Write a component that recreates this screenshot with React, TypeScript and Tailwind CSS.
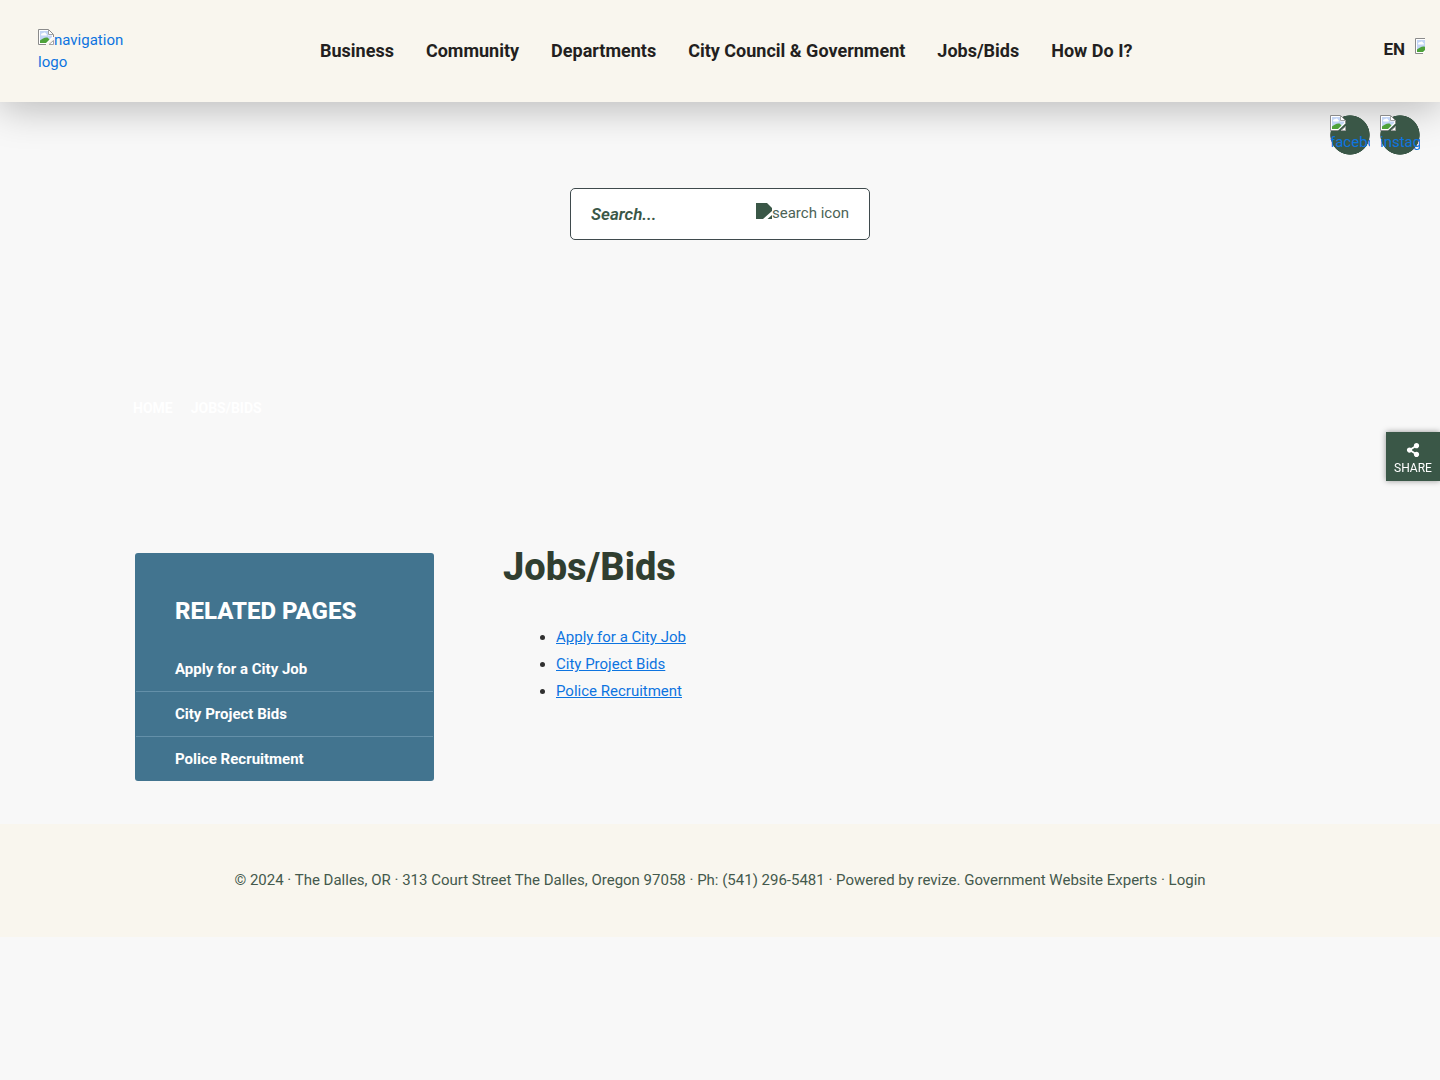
import { FaShareAlt } from "react-icons/fa"
import clsx from "clsx"

const navItems = [
    "Business",
    "Community",
    "Departments",
    "City Council & Government",
    "Jobs/Bids",
    "How Do I?",
]

const pages = ["Apply for a City Job", "City Project Bids", "Police Recruitment"]

const socials = ["facebook icon", "instagram icon"]

function MissingImage({ className }: { className?: string }) {
    return (
        <svg viewBox="0 0 16 16" className={clsx("h-4 w-4 shrink-0", className)} aria-hidden="true">
            <path d="M0.5 0.5h10l5 5v3L8 15.500H0.5z" fill="#fff" />
            <path d="M2 2h8v4.500h4V8l-6 5.500H2z" fill="#c3d5f5" />
            <path d="M3 6c0-1.400 1-2 2-1.700C6 3 8 3.500 8 5c1 0 1.300 1 .6 1.600H3.500z" fill="#fff" />
            <path d="M2 14v-2.500C4 9.500 7 8 9.500 8.500l2 2L8 14z" fill="#4ea23a" />
            <path d="M8 15.500H0.500V0.500h10l5 5V8" fill="none" stroke="#8b8b8b" />
            <path d="M10.500 0.500v5h5" fill="none" stroke="#a3a3a3" />
            <path d="M15.500 11.500v4h-4.500z" fill="#fff" stroke="#a3a3a3" />
        </svg>
    )
}

function Header() {
    return (
        <header className="relative z-10 flex h-[102px] items-center bg-[#f9f6ee] shadow-[0_5px_40px_rgba(0,0,0,0.28)]">
            <div className="w-[320px] shrink-0 pl-[38px]">
                <a href="#" className="block w-[100px] text-[#0d74e0]">
                    <MissingImage className="inline-block align-baseline" />navigation logo
                </a>
            </div>
            <nav className="flex flex-1 gap-8 text-lg font-bold text-[#231f20]">
                {navItems.map((item) => (
                    <a key={item} href="#" className="whitespace-nowrap">{item}</a>
                ))}
            </nav>
            <button type="button" className="mr-[15px] flex items-start gap-[10px] pb-1 text-[17px] font-bold text-[#231f20]">
                EN
                <span className="block h-4 w-[10px] overflow-hidden">
                    <MissingImage className="block max-w-none" />
                </span>
            </button>
        </header>
    )
}

function SearchForm() {
    return (
        <form className="mx-auto mt-[33px] flex h-[52px] w-[300px] items-center rounded-[5px] border border-[#3f4a4d] bg-white px-5">
            <input
                type="text"
                aria-label="Search"
                placeholder="Search..."
                className="min-w-0 flex-1 text-[17px] font-semibold italic text-[#3a5747] outline-none placeholder:text-[#3a5747] placeholder:opacity-100"
            />
            <button type="submit" className="flex items-center pb-[2px] text-[#4c6356]">
                <svg viewBox="0 0 16 16" className="mb-1 h-4 w-4" aria-hidden="true">
                    <path d="M0 0h11l5 5v3L7 16H0z" fill="#3a5747" />
                    <path d="M16 12v4h-4.500z" fill="#3a5747" />
                </svg>
                search icon
            </button>
        </form>
    )
}

function RelatedPages() {
    return (
        <aside className="w-[299px] shrink-0 rounded-[3px] bg-[#42748f] pt-10 text-white">
            <h2 className="px-10 pb-[18px] text-2xl leading-9 font-extrabold">RELATED PAGES</h2>
            <ul className="mx-px divide-y divide-[#6490a9]">
                {pages.map((page) => (
                    <li key={page}>
                        <a href="#" className="block px-[39px] py-[11px] font-bold">{page}</a>
                    </li>
                ))}
            </ul>
        </aside>
    )
}

export default function App() {
    return (
        <div className="min-h-screen bg-[#f8f8f8] font-[Roboto,sans-serif] text-[15px] leading-[22px]">
            <Header />

            <div className="flex justify-end gap-[10px] pt-[13px] pr-5">
                {socials.map((name) => (
                    <a
                        key={name}
                        href="#"
                        className="relative z-20 block h-10 w-10 overflow-hidden bg-[radial-gradient(circle_closest-side,#3a5747_97%,transparent)] text-[#0d74e0]"
                    >
                        <MissingImage className="block" />
                        <span className="block">{name}</span>
                    </a>
                ))}
            </div>

            <SearchForm />

            <nav aria-label="Breadcrumb" className="mx-auto mt-[157px] max-w-[1200px] px-[13px]">
                <ol className="flex gap-[18px] text-sm leading-[22px] font-bold text-white">
                    <li><a href="#">HOME</a></li>
                    <li>JOBS/BIDS</li>
                </ol>
            </nav>

            <div className="mx-auto mt-[134px] flex max-w-[1200px] items-start gap-[69px] px-[15px] pb-[43px]">
                <RelatedPages />
                <main className="flex-1">
                    <h1 className="mt-[-10px] text-[38px] leading-[48px] font-extrabold text-[#303e30]">Jobs/Bids</h1>
                    <ul className="mt-[35px] list-disc space-y-[5px] pl-[53px] text-[#303030]">
                        {pages.map((page) => (
                            <li key={page}>
                                <a href="#" className="text-[#0d74e0] underline">{page}</a>
                            </li>
                        ))}
                    </ul>
                </main>
            </div>

            <footer className="bg-[#f9f6ee] px-5 pt-[45px] pb-[46px] text-center text-[#44594c]">
                © 2024 · The Dalles, OR · 313 Court Street The Dalles, Oregon 97058 · Ph: (541) 296-5481 · Powered by{" "}
                <a href="#">revize.</a> Government Website Experts · <a href="#">Login</a>
            </footer>

            <button
                type="button"
                className="fixed top-[432px] right-0 z-20 flex h-[49px] w-[54px] flex-col items-center bg-[#3a5747] pt-[11px] text-xs leading-[22px] text-white shadow-[0_0_6px_rgba(0,0,0,0.4)]"
            >
                <FaShareAlt className="h-[14px] w-[14px] shrink-0" />
                SHARE
            </button>
        </div>
    )
}
